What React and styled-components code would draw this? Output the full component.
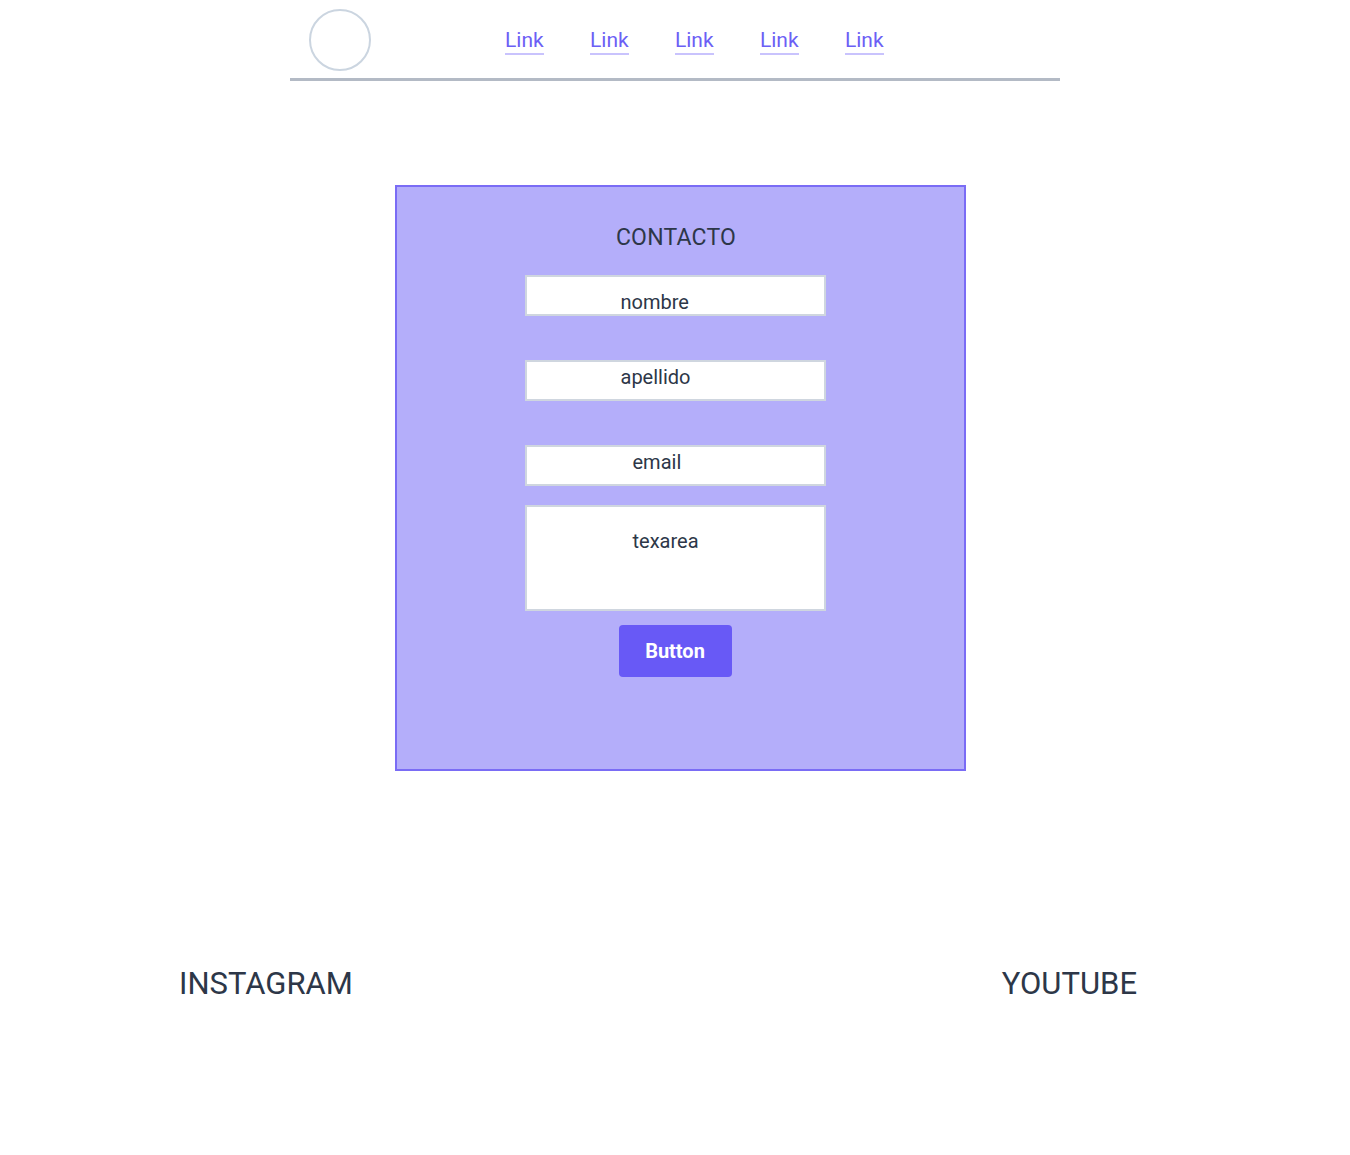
import React from 'react';
import styled, { createGlobalStyle } from 'styled-components';

const GlobalStyle = createGlobalStyle`
  body {
    margin: 0;
    background: #ffffff;
    font-family: Roboto, "Noto Sans", sans-serif;
    color: #2d3748;
  }
`;

const Page = styled.div`
  display: flex;
  flex-direction: column;
  align-items: center;
  min-height: 1155px;
`;

const Header = styled.header`
  width: 770px;
  height: 78px;
  display: flex;
  align-items: center;
  border-bottom: 3px solid #b3bac5;
  box-sizing: content-box;
`;

const Logo = styled.div`
  width: 58px;
  height: 58px;
  margin-left: 19px;
  margin-top: 2px;
  border: 2px solid #cbd5e0;
  border-radius: 50%;
`;

const Nav = styled.nav`
  display: flex;
  gap: 46.3px;
  margin-left: 134px;
  margin-top: 4px;
`;

const NavLink = styled.a`
  font-size: 21px;
  color: #6c5ff5;
  text-decoration: none;
  border-bottom: 2px solid #c9c3fd;
  line-height: 24px;
  padding-bottom: 1px;
  cursor: pointer;
`;

const Card = styled.form`
  margin-top: 104px;
  margin-left: 10px;
  width: 567px;
  height: 582px;
  background: #b4aefa;
  border: 2px solid #7a6cf5;
  display: flex;
  flex-direction: column;
  align-items: center;
`;

const Title = styled.h2`
  margin: 37px 8px 0 0;
  font-size: 23px;
  font-weight: 400;
  letter-spacing: 0.2px;
  line-height: 28px;
  color: #2d3748;
`;

const Field = styled.div`
  box-sizing: border-box;
  width: 301px;
  height: ${(p) => p.$h}px;
  margin-top: ${(p) => p.$mt}px;
  margin-right: 10px;
  padding-left: ${(p) => p.$pl}px;
  padding-top: ${(p) => p.$pt}px;
  background: #ffffff;
  border: 2px solid #cfd6df;
  font-size: 20px;
  line-height: 24px;
  color: #2d3748;
`;

const SubmitButton = styled.button`
  margin-top: 14px;
  margin-right: 10px;
  width: 113px;
  height: 52px;
  border: none;
  border-radius: 4px;
  background: #6859f6;
  color: #ffffff;
  font-family: Roboto, "Noto Sans", sans-serif;
  font-size: 20px;
  font-weight: 700;
  cursor: pointer;
`;

const Footer = styled.footer`
  margin-top: 193px;
  width: 958px;
  margin-right: 34px;
  display: flex;
  justify-content: space-between;
`;

const Social = styled.span`
  font-size: 31px;
  line-height: 40px;
  color: #2d3748;
`;

const fields = [
  { label: 'nombre', h: 41, mt: 23, pl: 94, pt: 13 },
  { label: 'apellido', h: 41, mt: 44, pl: 94, pt: 3 },
  { label: 'email', h: 41, mt: 44, pl: 106, pt: 3 },
  { label: 'texarea', h: 106, mt: 19, pl: 106, pt: 22 },
];

export default function App() {
  return (
    <>
      <GlobalStyle />
      <Page>
        <Header>
          <Logo />
          <Nav>
            {[1, 2, 3, 4, 5].map((i) => (
              <NavLink key={i}>Link</NavLink>
            ))}
          </Nav>
        </Header>
        <Card onSubmit={(e) => e.preventDefault()}>
          <Title>CONTACTO</Title>
          {fields.map((f) => (
            <Field key={f.label} $h={f.h} $mt={f.mt} $pl={f.pl} $pt={f.pt}>
              {f.label}
            </Field>
          ))}
          <SubmitButton type="submit">Button</SubmitButton>
        </Card>
        <Footer>
          <Social>INSTAGRAM</Social>
          <Social>YOUTUBE</Social>
        </Footer>
      </Page>
    </>
  );
}
